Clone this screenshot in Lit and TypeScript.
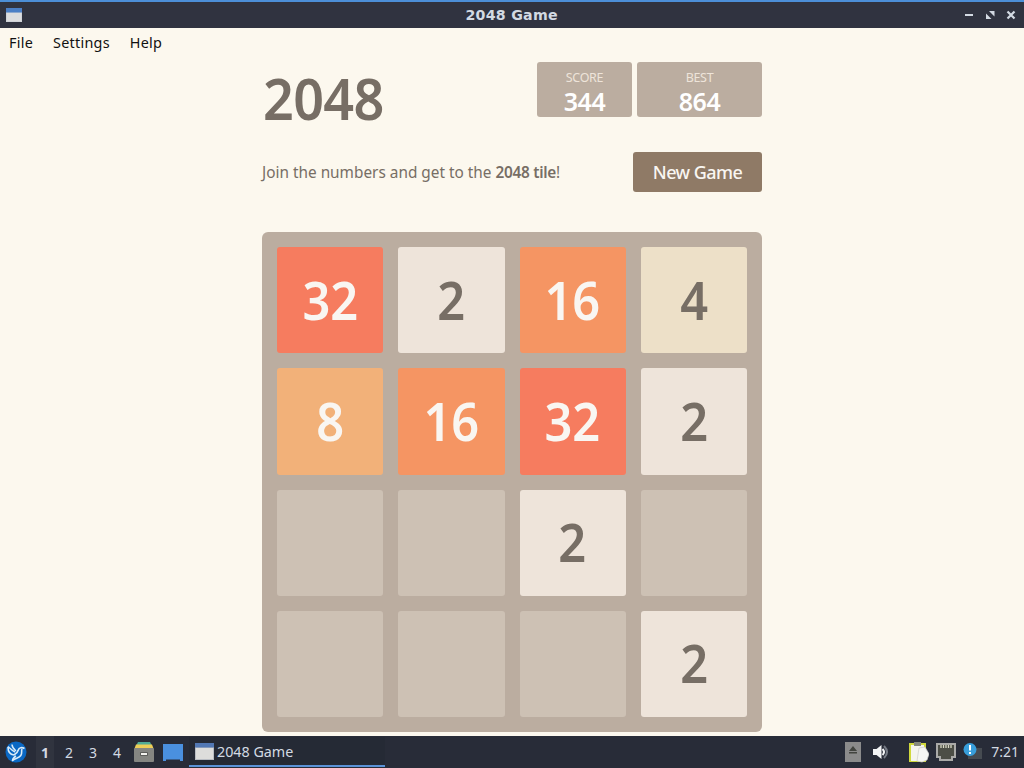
import { LitElement, html, svg, css, nothing } from 'lit';
import { customElement, property } from 'lit/decorators.js';
import { classMap } from 'lit/directives/class-map.js';

@customElement('title-bar')
export class TitleBar extends LitElement {
  @property({ type: String })
  caption: string = '';

  static override styles = css`
  :host {
    display: grid;
    grid-template-columns: 1fr auto 1fr;
    align-items: center;
    box-sizing: border-box;
    height: 28px;
    padding: 0 6px 0 6px;
    border-top: 2px solid #4c8fd8;
    background: #303340;
    color: #d3dae3;
    font: bold 13.4px/26px 'DejaVu Sans', sans-serif;
    letter-spacing: 0.25px;
  }

  svg {
    display: block;
    margin-bottom: 1px;
  }

  .caption {
    padding-top: 1px;
    transform: scaleX(1.06);
  }

  .buttons {
    justify-self: end;
  }
  `;

  protected override render() {
    return html`
      <svg width="16" height="16" viewBox="0 0 16 16">
        <rect y="1" width="16" height="14" fill="#cfd3d8"></rect>
        <rect x="1" y="6" width="14" height="8" fill="#dcdddf"></rect>
        <rect y="1" width="16" height="4.5" fill="#4b7fc6"></rect>
      </svg>
      <span class="caption">${this.caption}</span>
      <svg class="buttons" width="54" height="14" viewBox="0 0 54 14">
        <path d="M1 7h8" stroke="#d3dae3" stroke-width="2"></path>
        <path d="M25 3h5.500v5.500zM22 5.500v5.500h5.500z" fill="#d3dae3"></path>
        <path d="M43.500 3.500l7 7M50.500 3.500l-7 7" stroke="#d3dae3" stroke-width="2.200"></path>
      </svg>
    `;
  }
}

@customElement('game-board')
export class GameBoard extends LitElement {
  @property({ attribute: false })
  cells: number[] = [];

  static override styles = css`
  :host {
    display: grid;
    grid-template-columns: repeat(4, 1fr);
    grid-template-rows: repeat(4, 1fr);
    gap: 15px;
    box-sizing: border-box;
    width: 500px;
    height: 500px;
    padding: 15px;
    border-radius: 6px;
    background: #bbada0;
  }

  .cell {
    display: flex;
    align-items: center;
    justify-content: center;
    border-radius: 3px;
    background: #cdc1b4;
    color: #f9f6f2;
    font: 650 53px/1 'Noto Sans', sans-serif;
  }

  .number {
    padding-bottom: 2px;
    transform: scaleX(0.92);
  }

  .v2 {
    background: #eee4da;
    color: #776e65;
  }

  .v4 {
    background: #ede0c8;
    color: #776e65;
  }

  .v8 {
    background: #f2b179;
  }

  .v16 {
    background: #f59563;
  }

  .v32 {
    background: #f67c5f;
  }
  `;

  protected override render() {
    return this.cells.map(
      (value) => html`
        <div class=${classMap({ cell: true, [`v${value}`]: value > 0 })}>
          ${value ? html`<span class="number">${value}</span>` : nothing}
        </div>
      `
    );
  }
}

@customElement('task-bar')
export class TaskBar extends LitElement {
  @property({ type: String })
  task: string = '';

  @property({ type: String })
  time: string = '';

  static override styles = css`
  :host {
    display: flex;
    align-items: stretch;
    justify-content: space-between;
    box-sizing: border-box;
    height: 32px;
    padding: 0 5px 0 5px;
    background: #282c38;
    color: #d3dae3;
    font: 14px/32px 'Noto Sans', sans-serif;
  }

  .group {
    display: flex;
    align-items: center;
  }

  svg {
    display: block;
    flex: none;
  }

  .desktops {
    display: flex;
    margin: 0 5px 0 6px;
    font-size: 14px;
    line-height: 33px;
  }

  .desktop {
    width: 24px;
    text-align: center;
  }

  .current {
    width: 18px;
    margin: 0 3px;
    background: #30343f;
    font-weight: bold;
  }

  .files {
    margin-right: 9px;
  }

  .task {
    display: flex;
    align-items: center;
    gap: 3px;
    box-sizing: border-box;
    width: 196px;
    height: 30px;
    margin-left: 6px;
    padding-left: 6px;
    border-bottom: 2px solid #5b93d8;
    background: #252a35;
    font-size: 14.3px;
    line-height: 28px;
  }

  .task span {
    padding-top: 2px;
  }

  .eject {
    margin-right: 12px;
  }

  .volume {
    margin-right: 18px;
  }

  .clipboard, .network {
    margin-right: 7px;
  }

  .notice {
    margin-right: 8px;
  }
  `;

  private renderTray() {
    return html`
      <svg class="eject" width="16" height="20" viewBox="0 0 16 20">
        <rect width="16" height="20" fill="#8b8b8b"></rect>
        <path d="M8 4l4 5H4zM4 10h8v1.500H4z" fill="#42443f"></path>
      </svg>
      <svg class="volume" width="18" height="16" viewBox="0 0 18 16">
        <path d="M0 5h3.500l5-4v14l-5-4H0z" fill="#f3f4f5"></path>
        <path d="M9.500 5q3 3 0 6" fill="none" stroke="#f3f4f5" stroke-width="2"></path>
        <path d="M11 2q6 6 0 12" fill="none" stroke="#777c86" stroke-width="2"></path>
      </svg>
      <svg class="clipboard" width="20" height="22" viewBox="0 0 20 22">
        <rect x="0" y="2" width="17" height="19" fill="#d0d83c"></rect>
        <rect x="2" y="4" width="13" height="16" fill="#f4f4ee"></rect>
        <path d="M5 1h7v4H5z" fill="#85887d"></path>
        <path d="M10 7l6-1 4 7-2 6-5 2-5-1z" fill="#f6f6f3" stroke="#cfcfca" stroke-width=".7"></path>
      </svg>
      <svg class="network" width="20" height="19" viewBox="0 0 20 19">
        <path d="M1 1h18v13h-3v3H4v-3H1z" fill="#4c4e46" stroke="#aaaaa8" stroke-width="2"></path>
        <path d="M5 2v3M7.500 2v3M10 2v3M12.500 2v3M15 2v3" stroke="#d8d7c4" stroke-width="1.300"></path>
      </svg>
      <svg class="notice" width="20" height="20" viewBox="0 0 20 20">
        <rect x="5" y="6" width="14" height="11" fill="#464b51"></rect>
        <circle cx="7" cy="7.500" r="6.500" fill="#389edb"></circle>
        <path d="M7 3v5.500M7 10v2" stroke="#fff" stroke-width="2"></path>
      </svg>
    `;
  }

  protected override render() {
    const windowIcon = svg`
      <rect width="19" height="17" fill="#b9bdc3"></rect>
      <rect x="1" y="5" width="17" height="11" fill="#dddddb"></rect>
      <rect width="19" height="4.500" fill="#5278b4"></rect>
    `;

    return html`
      <div class="group">
        <svg width="22" height="22" viewBox="0 0 22 22">
          <circle cx="11" cy="11" r="10.500" fill="#0a68c4"></circle>
          <path d="M7 3.500c0 3 1.500 4.500 4 6.500M3 5.500c2.500 2 4 4.500 7 5.500" fill="none" stroke="#d9ebf8" stroke-width="1.500"></path>
          <path d="M3 6c0 4 2 7.500 6 8M19.500 7.500c-2.500-1.500-5.500-1-6.200 1.500-.5 2-1.800 3.500-4.300 5M17 8c-1 2 .5 4-1.200 6.500-1.600 2.500-4.800 2.500-8.300 5 .3-2 1.500-3.500 3.500-4.500" fill="none" stroke="#d9ebf8" stroke-width="1.600" stroke-linejoin="round"></path>
        </svg>
        <div class="desktops">
          <span class="desktop current">1</span>
          ${[2, 3, 4].map((n) => html`<span class="desktop">${n}</span>`)}
        </div>
        <svg class="files" width="20" height="20" viewBox="0 0 20 20">
          <path d="M4 0h12l2 4H2z" fill="#4fab96"></path>
          <path d="M2 2.500h16l1.500 4H.5z" fill="#edce57"></path>
          <rect y="6" width="20" height="14" rx="1" fill="#858682"></rect>
          <rect x="6" y="10" width="8" height="4" rx="1" fill="#5d5e5b"></rect>
          <rect x="7" y="11" width="6" height="2" fill="#f4f4f0"></rect>
        </svg>
        <svg width="20" height="18" viewBox="0 0 20 18">
          <path d="M0 1h20v17h-3v-1.500H3V18H0z" fill="#4a90df"></path>
        </svg>
        <div class="task">
          <svg width="19" height="17" viewBox="0 0 19 17">${windowIcon}</svg>
          <span>${this.task}</span>
        </div>
      </div>
      <div class="group">
        ${this.renderTray()}
        <span>${this.time}</span>
      </div>
    `;
  }
}

@customElement('app-root')
export class AppRoot extends LitElement {
  private cells: number[] = [
    32, 2, 16, 4,
    8, 16, 32, 2,
    0, 0, 2, 0,
    0, 0, 0, 2,
  ];

  static override styles = css`
  :host {
    display: flex;
    flex-direction: column;
    width: 1024px;
    height: 768px;
    overflow: hidden;
    background: #fcf8ee;
    color: #776e65;
    font-family: 'Noto Sans', sans-serif;
  }

  .menu {
    display: flex;
    gap: 20px;
    height: 34px;
    padding-left: 9px;
    color: #111;
    font-size: 14.4px;
    line-height: 30px;
    letter-spacing: 0.25px;
  }

  .game {
    flex: 1;
    width: 500px;
    margin: 0 auto;
  }

  .heading {
    display: flex;
    gap: 5px;
    height: 90px;
  }

  h1 {
    flex: 1;
    margin: 0;
    font-size: 58px;
    font-weight: 650;
    line-height: 72px;
    letter-spacing: -0.7px;
    text-indent: 1px;
    transform: scaleX(0.93);
    transform-origin: left;
  }

  .score {
    box-sizing: border-box;
    width: 95px;
    height: 55px;
    padding-top: 7px;
    border-radius: 3px;
    background: #bbada0;
    color: #fff;
    text-align: center;
    font-size: 25px;
    font-weight: 600;
    line-height: 30px;
    letter-spacing: -0.5px;
  }

  .best {
    width: 125px;
  }

  .label {
    display: block;
    color: #eee4da;
    font-size: 12.5px;
    font-weight: 400;
    line-height: 17px;
    letter-spacing: -0.3px;
  }

  .intro {
    display: flex;
    align-items: center;
    justify-content: space-between;
    height: 40px;
    margin-bottom: 40px;
    font-size: 16px;
    white-space: nowrap;
  }

  p {
    margin: 0;
    transform: scaleX(0.96);
    transform-origin: left;
  }

  strong {
    font-weight: 600;
    letter-spacing: -0.3px;
  }

  .restart {
    width: 129px;
    border-radius: 3px;
    background: #8f7a66;
    color: #f9f6f2;
    text-align: center;
    font-size: 18px;
    font-weight: 500;
    line-height: 40px;
    letter-spacing: -0.55px;
  }
  `;

  protected override render() {
    return html`
      <title-bar caption="2048 Game"></title-bar>
      <div class="menu"><span>File</span><span>Settings</span><span>Help</span></div>
      <div class="game">
        <div class="heading">
          <h1>2048</h1>
          <div class="score"><span class="label">SCORE</span>344</div>
          <div class="score best"><span class="label">BEST</span>864</div>
        </div>
        <div class="intro">
          <p>Join the numbers and get to the <strong>2048 tile</strong>!</p>
          <div class="restart">New Game</div>
        </div>
        <game-board .cells=${this.cells}></game-board>
      </div>
      <task-bar task="2048 Game" time="7:21"></task-bar>
    `;
  }
}

declare global {
  interface HTMLElementTagNameMap {
    'app-root': AppRoot;
    'title-bar': TitleBar;
    'game-board': GameBoard;
    'task-bar': TaskBar;
  }
}
